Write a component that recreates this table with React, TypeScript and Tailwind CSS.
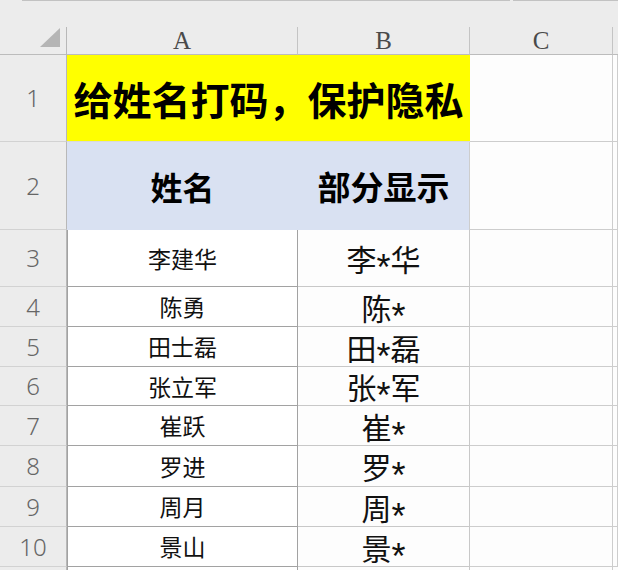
const names = [
  { n: 3, a: "李建华", b: ["李", "华"] },
  { n: 4, a: "陈勇", b: ["陈", ""] },
  { n: 5, a: "田士磊", b: ["田", "磊"] },
  { n: 6, a: "张立军", b: ["张", "军"] },
  { n: 7, a: "崔跃", b: ["崔", ""] },
  { n: 8, a: "罗进", b: ["罗", ""] },
  { n: 9, a: "周月", b: ["周", ""] },
  { n: 10, a: "景山", b: ["景", ""] },
];

function RowHead({ n }: { n: number }) {
  return (
    <div className="flex items-center justify-center border-r border-b border-r-[#b8b8b8] border-b-[#d2d2d2] bg-[#ececec] font-['Noto_Sans',sans-serif] text-[24px] leading-none font-light text-[#666]">
      {n}
    </div>
  );
}

function ColHead({ label, last }: { label: string; last?: boolean }) {
  return (
    <div
      className={
        "flex items-center justify-center border-b border-b-[#bcbcbc] bg-[#ececec] font-['Liberation_Serif',serif] text-[25px] leading-none text-[#4a4a4a] " +
        (last ? "" : "border-r border-r-[#c4c4c4]")
      }
    >
      {label}
    </div>
  );
}

function Blank() {
  return <div className="border-r border-b border-[#cdcdcd] bg-[#fdfdfd]" />;
}

export default function App() {
  return (
    <div className="h-[570px] w-[618px] overflow-hidden bg-white font-['Noto_Sans_CJK_SC',sans-serif]">
      <div className="grid h-full grid-cols-[67px_231px_172px_143px_5px] grid-rows-[27px_28px_87px_88px_57px_40px_40px_39px_40px_41px_40px_40px_3px]">
        {/* strip above the column headers */}
        <div className="col-span-5 bg-[#ececec]">
          <div className="flex h-px">
            <div className="w-[22px]" />
            <div className="w-[488px] bg-[#c2c2c2]" />
            <div className="w-[3px]" />
            <div className="flex-1 bg-[#c2c2c2]" />
          </div>
        </div>

        {/* column headers */}
        <div className="flex items-start justify-end border-r border-b border-r-[#b8b8b8] border-b-[#bcbcbc] bg-[#ececec] pt-px pr-[6px]">
          <svg width="20" height="19" viewBox="0 0 20 19">
            <polygon points="20,0 20,19 0,19" fill="#b5b5b5" />
          </svg>
        </div>
        <ColHead label="A" />
        <ColHead label="B" />
        <ColHead label="C" />
        <ColHead label="" last />

        {/* row 1 */}
        <RowHead n={1} />
        <div className="col-span-2 flex items-center justify-center border-b border-b-[#d9d9d9] bg-[#ffff00] text-[39px] leading-none font-bold text-black">
          给姓名打码，保护隐私
        </div>
        <Blank />
        <Blank />

        {/* row 2 */}
        <RowHead n={2} />
        <div className="flex items-center justify-center bg-[#d9e1f2] text-[32px] leading-none font-bold text-black">
          姓名
        </div>
        <div className="flex items-center justify-center border-r border-[#cdcdcd] bg-[#d9e1f2] text-[33px] leading-none font-bold text-black">
          部分显示
        </div>
        <Blank />
        <Blank />

        {/* rows 3-10 */}
        {names.map((r) => (
          <div key={r.n} className="contents">
            <RowHead n={r.n} />
            <div className="flex items-center justify-center border-x-[1.5px] border-b-[1.5px] border-[#a2a2a2] bg-white text-[23px] leading-none text-[#111]">
              {r.a}
            </div>
            <div className="flex items-center justify-center border-r border-b border-[#c8c8c8] bg-[#fdfdfd] text-[30px] leading-none text-[#111]">
              {r.b[0]}
              <span className="mt-[20px] h-[16px] font-['Liberation_Sans',sans-serif] text-[36px] leading-[16px]">
                *
              </span>
              {r.b[1]}
            </div>
            <Blank />
            <Blank />
          </div>
        ))}

        {/* partial row 11 */}
        <div className="border-r border-r-[#b8b8b8] bg-[#ececec]" />
        <div className="border-x-[1.5px] border-[#a2a2a2] bg-white" />
        <div className="border-r border-[#c8c8c8] bg-[#fdfdfd]" />
        <div className="border-r border-[#cdcdcd] bg-[#fdfdfd]" />
        <div className="bg-[#fdfdfd]" />
      </div>
    </div>
  );
}
